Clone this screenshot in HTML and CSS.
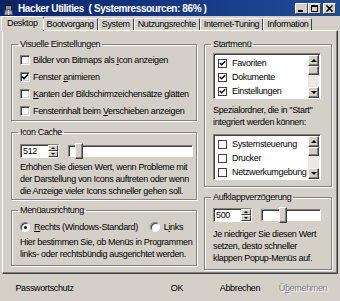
FILE: index.html
```html
<!DOCTYPE html>
<html lang="de">
<head>
    <meta charset="UTF-8">
    <title>Hacker Utilities</title>
    <link rel="stylesheet" href="styles.css">
</head>
<body>
    <div class="window">
        <div class="titlebar">
            <svg class="app-icon" width="11" height="13" viewBox="0 0 11 13">
                <rect x="2" y="0.5" width="7" height="3" fill="#202020"/>
                <rect x="0.5" y="3" width="10" height="1.5" fill="#202020"/>
                <rect x="3" y="4.5" width="5" height="3" fill="#e8e8e8"/>
                <rect x="3" y="5.5" width="5" height="1" fill="#404040"/>
                <path d="M1 13 L2 8 L9 8 L10 13 Z" fill="#a0a0a0" stroke="#303030" stroke-width="0.7"/>
                <rect x="5" y="8" width="1" height="5" fill="#e8e8e8"/>
            </svg>
            <span class="title">Hacker Utilities  ( Systemressourcen: 86% )</span>
            <div class="caption-buttons">
                <span class="cap-btn">
                    <svg width="9" height="7" viewBox="0 0 9 7"><rect x="1" y="5" width="5" height="2" fill="#000"/></svg>
                </span>
                <span class="cap-btn">
                    <svg width="9" height="7" viewBox="0 0 9 7"><rect x="1.5" y="0.5" width="6" height="6" fill="none" stroke="#000"/><rect x="1" y="0" width="7" height="2" fill="#000"/></svg>
                </span>
                <span class="cap-btn close">
                    <svg width="9" height="7" viewBox="0 0 9 7"><path d="M1.5 0.5 L7.5 6.5 M7.5 0.5 L1.5 6.5" stroke="#000" stroke-width="1.6"/></svg>
                </span>
            </div>
        </div>

        <div class="tabs">
            <div class="tab active">Desktop</div>
            <div class="tab">Bootvorgang</div>
            <div class="tab">System</div>
            <div class="tab">Nutzungsrechte</div>
            <div class="tab">Internet-Tuning</div>
            <div class="tab">Information</div>
        </div>

        <div class="panel">
            <div class="col">
                <fieldset class="group">
                    <legend>Visuelle Einstellungen</legend>
                    <div class="check-row"><span class="check"></span><span>Bilder von Bitmaps als <u>I</u>con anzeigen</span></div>
                    <div class="check-row"><span class="check checked"><svg width="8" height="8" viewBox="0 0 8 8"><path d="M1 3.5 L3 5.5 L7 1.5" fill="none" stroke="#000" stroke-width="1.6"/></svg></span><span>Fenster <u>a</u>nimieren</span></div>
                    <div class="check-row"><span class="check"></span><span><u>K</u>anten der Bildschirmzeichensätze glätten</span></div>
                    <div class="check-row"><span class="check"></span><span>Fensterinhalt beim <u>V</u>erschieben anzeigen</span></div>
                </fieldset>

                <fieldset class="group cache">
                    <legend>Icon Cache</legend>
                    <div class="value-row">
                        <div class="spin">
                            <span class="spin-value">512</span>
                            <span class="spin-btns"><span class="spin-up"></span><span class="spin-down"></span></span>
                        </div>
                        <div class="slider"><span class="thumb thumb-cache"></span></div>
                    </div>
                    <p class="note">Erhöhen Sie diesen Wert, wenn Probleme mit<br>der Darstellung von Icons auftreten oder wenn<br>die Anzeige vieler Icons schneller gehen soll.</p>
                </fieldset>

                <fieldset class="group align">
                    <legend>Menüausrichtung</legend>
                    <div class="radio-row">
                        <span class="radio-item"><span class="radio on"></span><span><u>R</u>echts (Windows-Standard)</span></span>
                        <span class="radio-item"><span class="radio"></span><span>L<u>i</u>nks</span></span>
                    </div>
                    <p class="note">Hier bestimmen Sie, ob Menüs in Programmen<br>links- oder rechtsbündig ausgerichtet werden.</p>
                </fieldset>
            </div>

            <div class="col">
                <fieldset class="group start">
                    <legend>Startmenü</legend>
                    <div class="listbox">
                        <div class="list-items">
                            <div class="list-item"><span class="flat-check"><svg width="7" height="7" viewBox="0 0 7 7"><path d="M0.8 3 L2.6 4.8 L6.2 1.2" fill="none" stroke="#000" stroke-width="1.5"/></svg></span><span>Favoriten</span></div>
                            <div class="list-item"><span class="flat-check"><svg width="7" height="7" viewBox="0 0 7 7"><path d="M0.8 3 L2.6 4.8 L6.2 1.2" fill="none" stroke="#000" stroke-width="1.5"/></svg></span><span>Dokumente</span></div>
                            <div class="list-item"><span class="flat-check"><svg width="7" height="7" viewBox="0 0 7 7"><path d="M0.8 3 L2.6 4.8 L6.2 1.2" fill="none" stroke="#000" stroke-width="1.5"/></svg></span><span>Einstellungen</span></div>
                        </div>
                        <div class="scrollbar">
                            <span class="sb-btn"><span class="arrow-up"></span></span>
                            <span class="sb-thumb"></span>
                            <span class="sb-track"></span>
                            <span class="sb-btn"><span class="arrow-down"></span></span>
                        </div>
                    </div>
                    <p class="note special">Spezialordner, die in "Start"<br>integriert werden können:</p>
                    <div class="listbox">
                        <div class="list-items">
                            <div class="list-item"><span class="flat-check"></span><span>Systemsteuerung</span></div>
                            <div class="list-item"><span class="flat-check"></span><span>Drucker</span></div>
                            <div class="list-item"><span class="flat-check"></span><span>Netzwerkumgebung</span></div>
                        </div>
                        <div class="scrollbar">
                            <span class="sb-btn"><span class="arrow-up"></span></span>
                            <span class="sb-thumb"></span>
                            <span class="sb-track"></span>
                            <span class="sb-btn"><span class="arrow-down"></span></span>
                        </div>
                    </div>
                </fieldset>

                <fieldset class="group delay">
                    <legend>Aufklappverzögerung</legend>
                    <div class="value-row">
                        <div class="spin">
                            <span class="spin-value">500</span>
                            <span class="spin-btns"><span class="spin-up"></span><span class="spin-down"></span></span>
                        </div>
                        <div class="slider"><span class="thumb thumb-delay"></span></div>
                    </div>
                    <p class="note">Je niedriger Sie diesen Wert<br>setzen, desto schneller<br>klappen Popup-Menüs auf.</p>
                </fieldset>
            </div>
        </div>

        <div class="footer">
            <button class="flat-button wide">Passwortschutz</button>
            <div class="footer-right">
                <button class="flat-button">OK</button>
                <button class="flat-button">Abbrechen</button>
                <button class="flat-button disabled">Ü<u>b</u>ernehmen</button>
            </div>
        </div>
    </div>
</body>
</html>
```

FILE: styles.css
```css
body {
    margin: 0;
    background-color: #d4d0c8;
    font-family: "Liberation Sans", Arial, sans-serif;
    font-size: 9px;
    letter-spacing: -0.35px;
    color: #000;
}

.window {
    width: 340px;
    height: 301px;
    display: flex;
    flex-direction: column;
    background-color: #d4d0c8;
    overflow: hidden;
}

/* title bar */
.titlebar {
    height: 16px;
    flex: none;
    display: flex;
    align-items: center;
    padding: 0 4px 0 3px;
    background: linear-gradient(to right, #0a246a, #1f4c98);
    color: #fff;
}

.app-icon {
    margin-right: 4px;
}

.title {
    flex: 1;
    font-weight: bold;
    font-size: 10px;
    letter-spacing: -0.4px;
    white-space: pre;
}

.caption-buttons {
    display: flex;
}

.cap-btn {
    width: 11px;
    height: 9px;
    display: flex;
    align-items: center;
    justify-content: center;
    background-color: #d4d0c8;
    border: 1px solid;
    border-color: #fff #404040 #404040 #fff;
}

.cap-btn.close {
    margin-left: 2px;
}

/* tabs */
.tabs {
    height: 14px;
    flex: none;
    display: flex;
    align-items: flex-end;
    padding-left: 3px;
    position: relative;
    z-index: 1;
}

.tab {
    height: 12px;
    box-sizing: border-box;
    padding: 0 3px;
    line-height: 11px;
    border: 1px solid;
    border-color: #fff #404040 transparent #fff;
    border-bottom: none;
    border-radius: 2px 2px 0 0;
    background-color: #d4d0c8;
    white-space: nowrap;
}

.tab.active {
    height: 15px;
    margin: 0 -1px -1px -2px;
    padding: 0 5px;
    line-height: 12px;
}

/* panel */
.panel {
    height: 244px;
    flex: none;
    box-sizing: border-box;
    margin: 0 2px;
    border: 1px solid;
    border-color: #fff #404040 #404040 #fff;
    box-shadow: inset -1px -1px 0 #808080;
    display: grid;
    grid-template-columns: 186px 128px;
    column-gap: 7px;
    align-items: start;
    padding: 7px 0 0 8px;
}

.col {
    display: flex;
    flex-direction: column;
}

.group {
    margin: 0;
    padding: 1px 3px 1px 8px;
    border: 1px solid #808080;
    box-shadow: 1px 1px 0 #fff, inset 1px 1px 0 #fff;
    min-width: 0;
}

.group legend {
    padding: 0 2px;
    margin-left: -2px;
    line-height: 12px;
}

.group.cache {
    margin-top: 5px;
    padding: 6px 3px 2px 8px;
}

.group.align {
    margin-top: 4px;
    padding: 4px 3px 5px 8px;
}

.group.start {
    padding: 3px 10px 6px 8px;
}

.group.delay {
    margin-top: 4px;
    padding: 5px 10px 5px 8px;
}

.note {
    margin: 0;
    line-height: 12px;
    white-space: nowrap;
}

.note.special {
    margin: 5px 0 6px;
}

/* checkboxes */
.check-row {
    height: 17px;
    display: flex;
    align-items: center;
    white-space: nowrap;
}

.check {
    width: 8px;
    height: 8px;
    margin-right: 3px;
    display: flex;
    align-items: center;
    justify-content: center;
    background-color: #fff;
    border: 1px solid;
    border-color: #808080 #fff #fff #808080;
    box-shadow: inset 1px 1px 0 #404040, inset -1px -1px 0 #d4d0c8;
    flex: none;
}

/* spinner + slider */
.value-row {
    height: 14px;
    display: flex;
    align-items: center;
    gap: 9px;
    margin-bottom: 3px;
}

.delay .value-row {
    margin-bottom: 6px;
}

.spin {
    width: 39px;
    height: 14px;
    box-sizing: border-box;
    display: flex;
    background-color: #fff;
    border: 1px solid;
    border-color: #808080 #fff #fff #808080;
    box-shadow: inset 1px 1px 0 #404040;
    flex: none;
}

.spin-value {
    flex: 1;
    padding: 1px 0 0 2px;
    line-height: 11px;
}

.spin-btns {
    width: 10px;
    display: flex;
    flex-direction: column;
}

.spin-up,
.spin-down {
    flex: 1;
    box-sizing: border-box;
    background-color: #d4d0c8;
    border: 1px solid;
    border-color: #fff #404040 #404040 #fff;
    display: flex;
    align-items: center;
    justify-content: center;
}

.spin-up::after {
    content: "";
    border: 2px solid transparent;
    border-bottom: 2px solid #000;
    border-top: none;
}

.spin-down::after {
    content: "";
    border: 2px solid transparent;
    border-top: 2px solid #000;
    border-bottom: none;
}

.slider {
    flex: 1;
    height: 12px;
    box-sizing: border-box;
    background-color: #fff;
    border: 1px solid;
    border-color: #808080 #fff #fff #808080;
    box-shadow: inset 1px 1px 0 #404040;
    position: relative;
}

.thumb {
    position: absolute;
    top: -3px;
    width: 8px;
    height: 16px;
    box-sizing: border-box;
    background-color: #d4d0c8;
    border: 1px solid;
    border-color: #fff #404040 #404040 #fff;
    box-shadow: inset -1px -1px 0 #808080;
}

.thumb-cache {
    left: 6px;
}

.thumb-delay {
    left: 17px;
}

/* radios */
.radio-row {
    height: 14px;
    display: flex;
    align-items: center;
    gap: 12px;
    margin-bottom: 2px;
    white-space: nowrap;
}

.radio-item {
    display: flex;
    align-items: center;
}

.radio {
    width: 8px;
    height: 8px;
    margin-right: 4px;
    border-radius: 50%;
    background-color: #fff;
    border: 1px solid;
    border-color: #808080 #fff #fff #808080;
    box-shadow: inset 1px 1px 0 #404040;
    display: flex;
    align-items: center;
    justify-content: center;
}

.radio.on::after {
    content: "";
    width: 3px;
    height: 3px;
    border-radius: 50%;
    background-color: #000;
}

/* listboxes */
.listbox {
    height: 46px;
    box-sizing: border-box;
    display: flex;
    background-color: #fff;
    border: 1px solid;
    border-color: #808080 #fff #fff #808080;
    box-shadow: inset 1px 1px 0 #404040;
    padding: 1px 1px 0 1px;
}

.list-items {
    flex: 1;
    padding-top: 1px;
}

.list-item {
    height: 14px;
    display: flex;
    align-items: center;
    padding-left: 3px;
    white-space: nowrap;
}

.flat-check {
    width: 7px;
    height: 7px;
    margin-right: 5px;
    border: 1px solid #404040;
    display: flex;
    align-items: center;
    justify-content: center;
}

.scrollbar {
    width: 11px;
    display: flex;
    flex-direction: column;
    background-color: #ebe9e5;
}

.sb-btn,
.sb-thumb {
    height: 11px;
    box-sizing: border-box;
    background-color: #d4d0c8;
    border: 1px solid;
    border-color: #fff #404040 #404040 #fff;
    box-shadow: inset -1px -1px 0 #808080;
    display: flex;
    align-items: center;
    justify-content: center;
}

.sb-thumb {
    height: 9px;
}

.sb-track {
    flex: 1;
}

.arrow-up {
    border: 3px solid transparent;
    border-bottom: 3px solid #000;
    border-top: none;
}

.arrow-down {
    border: 3px solid transparent;
    border-top: 3px solid #000;
    border-bottom: none;
}

/* footer */
.footer {
    flex: 1;
    display: flex;
    align-items: center;
    justify-content: space-between;
    padding: 0 7px 0 4px;
}

.footer-right {
    display: flex;
    gap: 3px;
}

.flat-button {
    width: 60px;
    height: 20px;
    padding: 0;
    border: none;
    background: none;
    font-family: inherit;
    font-size: 9px;
    letter-spacing: -0.35px;
    color: #000;
}

.flat-button.wide {
    width: 81px;
}

.flat-button.disabled {
    color: #808080;
    text-shadow: 1px 1px 0 #fff;
}
```
